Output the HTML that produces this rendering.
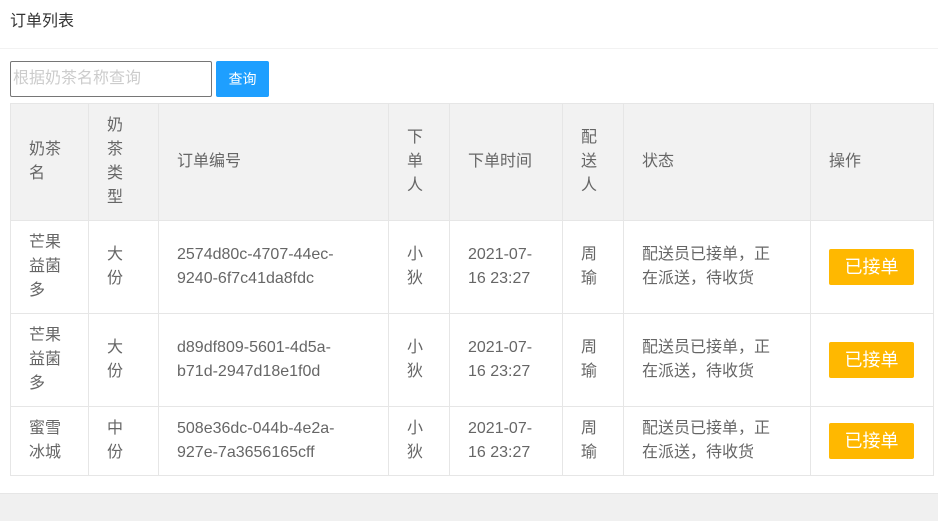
<!DOCTYPE html>
<html><head><meta charset="utf-8"><style>
*{margin:0;padding:0;box-sizing:border-box}
body{width:938px;height:521px;background:#fff;font-family:"Liberation Sans","Noto Sans CJK SC",sans-serif;overflow:hidden;position:relative;color:#666}
.title{position:absolute;left:10px;top:11px;font-size:16px;color:#333;line-height:22px}
.hr{position:absolute;left:0;right:0;top:48px;height:1px;background:#f2f2f2}
.inp{position:absolute;left:10px;top:61px;width:202px;height:36px;border:1px solid #767676;border-radius:2px;font-size:16px;color:#ccc;line-height:34px;padding-left:2px}
.btn{position:absolute;left:216px;top:61px;width:53px;height:36px;background:#1E9FFF;border-radius:2px;color:#fff;font-size:14px;line-height:36px;text-align:center}
table{position:absolute;left:10px;top:103px;border-collapse:collapse;table-layout:fixed;width:923px}
td,th{border:1px solid #e6e6e6;font-size:16px;line-height:24px;font-weight:normal;text-align:left;padding:0 18px;vertical-align:middle;color:#666}
th{background:#f2f2f2}
.op{display:inline-block;width:85px;height:36px;background:#FFB800;border-radius:2px;color:#fff;font-size:18px;line-height:36px;text-align:center}
.foot{position:absolute;left:0;right:0;top:493px;bottom:0;background:#f0f0f0;border-top:1px solid #e6e6e6}
</style></head><body>
<div class="title">订单列表</div>
<div class="hr"></div>
<div class="inp">根据奶茶名称查询</div>
<div class="btn">查询</div>
<table>
<colgroup><col style="width:78px"><col style="width:70px"><col style="width:230px"><col style="width:61px"><col style="width:113px"><col style="width:61px"><col style="width:187px"><col style="width:123px"></colgroup>
<tr style="height:117px"><th>奶茶<br>名</th><th>奶<br>茶<br>类<br>型</th><th>订单编号</th><th>下<br>单<br>人</th><th>下单时间</th><th>配<br>送<br>人</th><th>状态</th><th>操作</th></tr>
<tr style="height:93px"><td>芒果<br>益菌<br>多</td><td>大<br>份</td><td>2574d80c-4707-44ec-<br>9240-6f7c41da8fdc</td><td>小<br>狄</td><td>2021-07-<br>16 23:27</td><td>周<br>瑜</td><td>配送员已接单，正<br>在派送，待收货</td><td><span class="op">已接单</span></td></tr>
<tr style="height:93px"><td>芒果<br>益菌<br>多</td><td>大<br>份</td><td>d89df809-5601-4d5a-<br>b71d-2947d18e1f0d</td><td>小<br>狄</td><td>2021-07-<br>16 23:27</td><td>周<br>瑜</td><td>配送员已接单，正<br>在派送，待收货</td><td><span class="op">已接单</span></td></tr>
<tr style="height:69px"><td>蜜雪<br>冰城</td><td>中<br>份</td><td>508e36dc-044b-4e2a-<br>927e-7a3656165cff</td><td>小<br>狄</td><td>2021-07-<br>16 23:27</td><td>周<br>瑜</td><td>配送员已接单，正<br>在派送，待收货</td><td><span class="op">已接单</span></td></tr>
</table>
<div class="foot"></div>
</body></html>
